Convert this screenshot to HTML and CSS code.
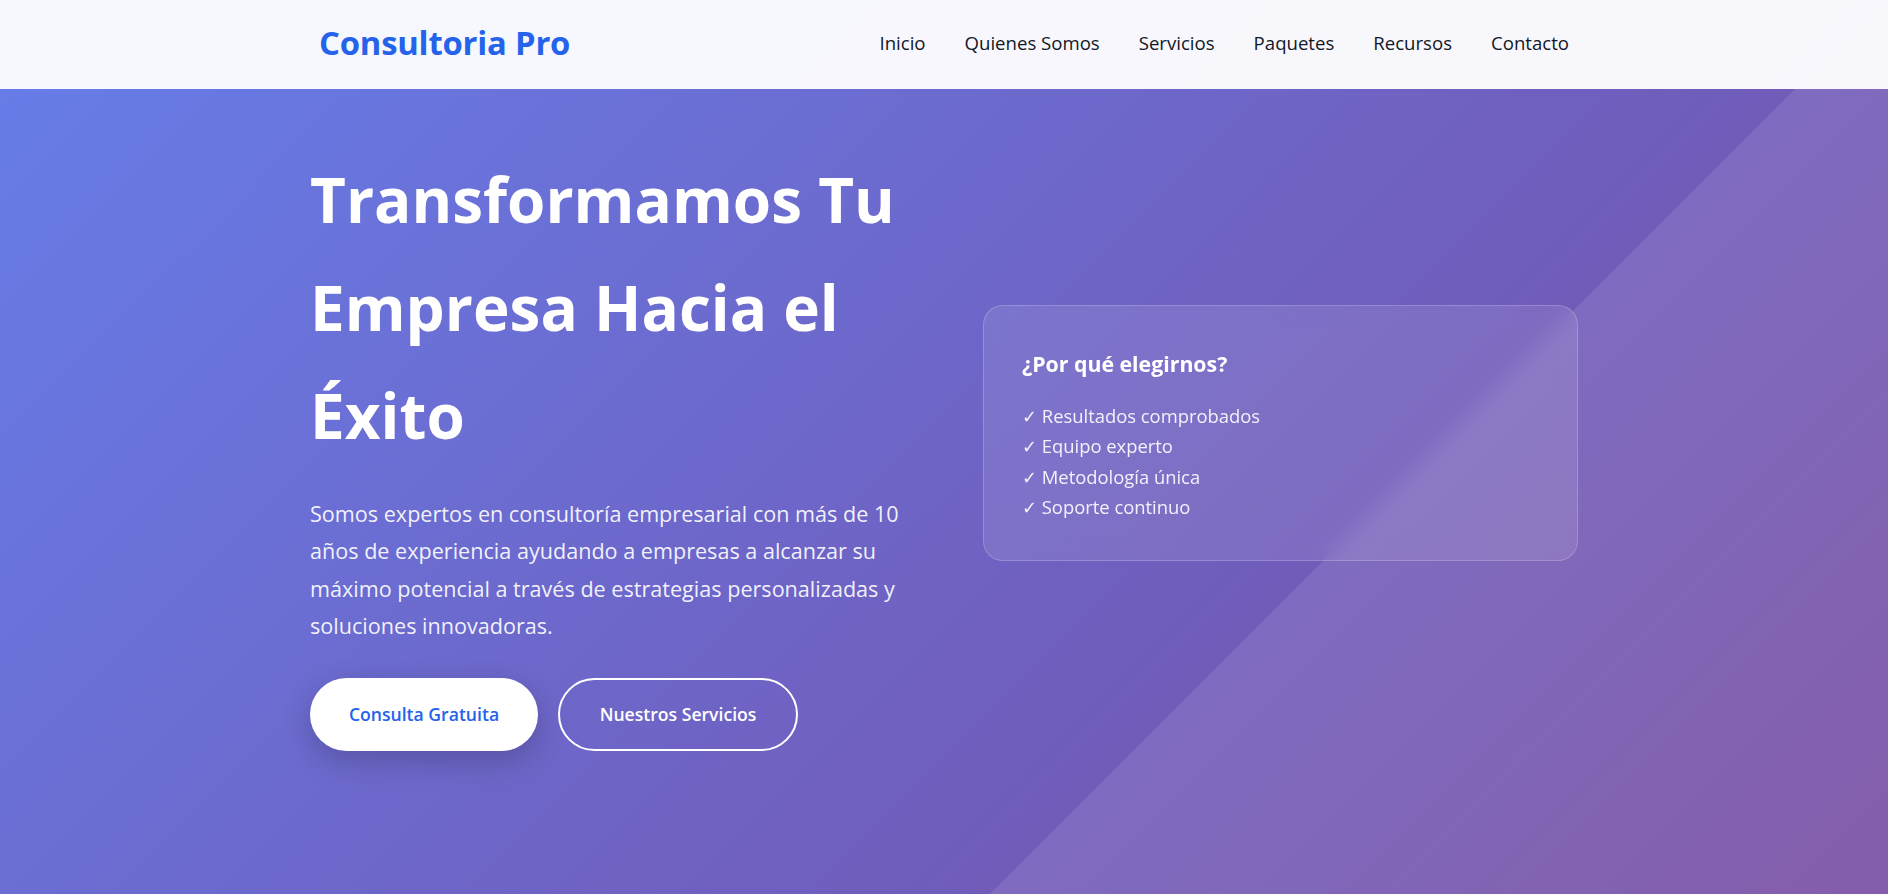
FILE: index.html
```html
<!DOCTYPE html>
<html lang="es">
<head>
<meta charset="utf-8">
<title>Consultoria Pro</title>
<link rel="stylesheet" href="styles.css">
</head>
<body>
<div class="page">
  <header class="site-header">
    <div class="header-inner">
      <a class="logo" href="#">Consultoria Pro</a>
      <nav>
        <ul class="nav-list">
          <li><a href="#">Inicio</a></li>
          <li><a href="#">Quienes Somos</a></li>
          <li><a href="#">Servicios</a></li>
          <li><a href="#">Paquetes</a></li>
          <li><a href="#">Recursos</a></li>
          <li><a href="#">Contacto</a></li>
        </ul>
      </nav>
    </div>
  </header>
  <section class="hero">
    <div class="hero-inner">
      <div class="hero-text">
        <h1>Transformamos Tu Empresa Hacia el Éxito</h1>
        <p>Somos expertos en consultoría empresarial con más de 10 años de experiencia ayudando a empresas a alcanzar su máximo potencial a través de estrategias personalizadas y soluciones innovadoras.</p>
        <div class="hero-buttons">
          <a class="btn btn-primary" href="#">Consulta Gratuita</a>
          <a class="btn btn-outline" href="#">Nuestros Servicios</a>
        </div>
      </div>
      <div class="hero-card">
        <h3>¿Por qué elegirnos?</h3>
        <ul>
          <li>✓ Resultados comprobados</li>
          <li>✓ Equipo experto</li>
          <li>✓ Metodología única</li>
          <li>✓ Soporte continuo</li>
        </ul>
      </div>
    </div>
  </section>
</div>
</body>
</html>
```

FILE: styles.css
```css
* { box-sizing: border-box; margin: 0; padding: 0; }

html, body { height: 100%; }

body {
  font-family: "Open Sans", "Noto Sans", sans-serif;
  color: #1f2937;
  overflow: hidden;
}

a { text-decoration: none; }

.page {
  position: relative;
  height: 894px;
  background: linear-gradient(135deg, #667eea 0%, #764ba2 100%);
  display: flex;
  flex-direction: column;
}

.page::before {
  content: "";
  position: absolute;
  inset: 0;
  background: rgba(255, 255, 255, 0.1);
  clip-path: polygon(1884px 0, 100% 0, 100% 100%, 990px 100%);
}

.site-header {
  position: relative;
  z-index: 2;
  height: 89px;
  background: rgba(255, 255, 255, 0.95);
  display: flex;
  align-items: center;
}

.header-inner {
  width: 1250px;
  margin: 0 auto;
  display: flex;
  align-items: center;
  justify-content: space-between;
  position: relative;
  top: -2px;
}

.logo {
  font-size: 32.8px;
  font-weight: 700;
  color: #2563eb;
  letter-spacing: -0.2px;
}

.nav-list {
  list-style: none;
  display: flex;
  gap: 39px;
}

.nav-list a {
  font-size: 18.6px;
  font-weight: 500;
  color: #111827;
}

.hero {
  position: relative;
  z-index: 1;
  flex: 1;
  padding-top: 56px;
}

.hero-inner {
  width: 1268px;
  margin: 0 auto;
  display: grid;
  grid-template-columns: 1fr 595px;
  gap: 72px;
  align-items: center;
}

.hero-text h1 {
  font-size: 62px;
  line-height: 108px;
  font-weight: 700;
  color: #fff;
  margin-bottom: 26px;
}

.hero-text p {
  font-size: 21.6px;
  line-height: 37.4px;
  color: rgba(255, 255, 255, 0.92);
  margin-bottom: 33px;
}

.hero-buttons {
  display: flex;
  gap: 20px;
}

.btn {
  display: inline-flex;
  align-items: center;
  justify-content: center;
  height: 73px;
  border-radius: 40px;
  font-size: 17.6px;
  font-weight: 600;
}

.btn-primary {
  width: 228px;
  background: #fff;
  color: #2563eb;
  box-shadow: 0 10px 30px rgba(0, 0, 0, 0.2);
}

.btn-outline {
  width: 240px;
  border: 2px solid #fff;
  color: #fff;
}

.hero-card {
  margin-bottom: 30px;
  background: rgba(255, 255, 255, 0.1);
  border: 1px solid rgba(255, 255, 255, 0.2);
  border-radius: 20px;
  padding: 41px 40px 37px 38px;
  backdrop-filter: blur(10px);
  color: #fff;
}

.hero-card h3 {
  font-size: 21.3px;
  line-height: 33px;
  font-weight: 700;
  margin-bottom: 21px;
}

.hero-card ul {
  list-style: none;
}

.hero-card li {
  font-size: 18.4px;
  line-height: 30.4px;
  color: rgba(255, 255, 255, 0.9);
}
```
